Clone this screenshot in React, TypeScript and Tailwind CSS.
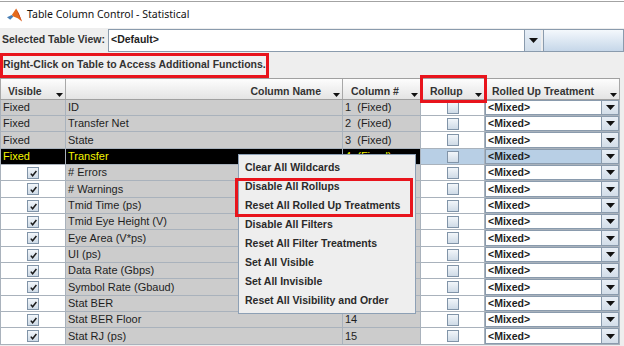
import React from 'react';

type Row = { name: string; num: string; fixed?: boolean; selected?: boolean };

// rows 5-13 sit under the context menu, so their column # is not visible
const rows: Row[] = [
  { name: 'ID', num: '1  (Fixed)', fixed: true },
  { name: 'Transfer Net', num: '2  (Fixed)', fixed: true },
  { name: 'State', num: '3  (Fixed)', fixed: true },
  { name: 'Transfer', num: '4  (Fixed)', fixed: true, selected: true },
  { name: '# Errors', num: '' },
  { name: '# Warnings', num: '' },
  { name: 'Tmid Time (ps)', num: '' },
  { name: 'Tmid Eye Height (V)', num: '' },
  { name: 'Eye Area (V*ps)', num: '' },
  { name: 'UI (ps)', num: '' },
  { name: 'Data Rate (Gbps)', num: '' },
  { name: 'Symbol Rate (Gbaud)', num: '' },
  { name: 'Stat BER', num: '' },
  { name: 'Stat BER Floor', num: '14' },
  { name: 'Stat RJ (ps)', num: '15' },
];

const menuItems = [
  'Clear All Wildcards',
  'Disable All Rollups',
  'Reset All Rolled Up Treatments',
  'Disable All Filters',
  'Reset All Filter Treatments',
  'Set All Visible',
  'Set All Invisible',
  'Reset All Visibility and Order',
];

const rowHeights = ['h-[16px]', 'h-[16px]', 'h-[17px]'];

const SortArrow = () => (
  <svg className="absolute right-[2px] bottom-[2px]" width="7" height="4" viewBox="0 0 7 4">
    <path d="M0 0h7L3.5 4z" fill="#111" />
  </svg>
);

const DownArrow = () => (
  <svg width="9" height="5" viewBox="0 0 9 5">
    <path d="M0 0h9L4.5 5z" fill="#111" />
  </svg>
);

const CheckBox = ({ checked }: { checked?: boolean }) => (
  <div className="w-[12px] h-[12px] border border-[#8194a8] bg-gradient-to-b from-[#f2f6fa] to-[#cfdbe7] flex items-end justify-start pl-[2px] pb-[1px]">
    {checked && (
      <svg width="7" height="7" viewBox="0 0 7 7">
        <path d="M0.8 3.6L2.6 5.8L6.4 1" stroke="#1a1a1a" strokeWidth="1.5" fill="none" />
      </svg>
    )}
  </div>
);

const MatlabIcon = () => (
  <svg width="15" height="14" viewBox="0 0 14 13">
    <path d="M0 8.5L4.5 6.5L6 8L3 11z" fill="#4a7fb5" />
    <path d="M4.5 6.5L8.5 0.5L11 5L14 12.5L10 9.5L6 8z" fill="#e46a1c" />
    <path d="M8.5 0.5L11 5L14 12.5L12 9z" fill="#b8321a" />
  </svg>
);

export default function App() {
  return (
    <div className="relative w-[624px] h-[346px] overflow-hidden bg-[#eeeeee] font-['Liberation_Sans',Arial,sans-serif] text-[#1e1e1e]">
      {/* title bar */}
      <div className="bg-white pt-[1px] h-[28px]">
        <div className="border-t border-[#a3a3a3] h-full flex items-center gap-[5px] pl-[7px] pb-[1px]">
          <MatlabIcon />
          <span className="font-['Noto_Sans',sans-serif] text-[10.5px] text-[#111]">Table Column Control - Statistical</span>
        </div>
      </div>

      {/* selected view */}
      <div className="flex items-center h-[24px]">
        <span className="w-[108px] pl-[2px] text-[10.5px] font-bold text-[#333]">Selected Table View:</span>
        <div className="flex h-[23px] flex-1 border border-[#8a9bad]">
          <div className="flex-1 bg-white flex items-center pl-[2px] text-[10.5px] font-bold">&lt;Default&gt;</div>
          <div className="w-[17px] border-l border-[#8a9bad] bg-gradient-to-b from-[#e6eef7] to-[#d0ddea] flex items-center justify-center">
            <DownArrow />
          </div>
          <div className="w-[2px] bg-[#eeeeee]" />
          <div className="w-[80px] border-l border-[#8a9bad] bg-gradient-to-b from-[#f4f8fc] to-[#c6d7e9]" />
        </div>
      </div>

      {/* hint */}
      <div className="h-[26px] flex items-center">
        <div className="h-[25px] w-[269px] border-[3px] border-[#e8141c] bg-[#f0f0f0] flex items-center text-[10.5px] font-bold text-[#333] whitespace-nowrap">
          Right-Click on Table to Access Additional Functions.
        </div>
      </div>

      {/* table */}
      <div className="w-[620px]">
        <div className="flex h-[22px] border-y border-[#a0a0a0] bg-gradient-to-b from-[#fdfdfd] to-[#e4e4e4] text-[10.5px] font-bold text-[#333]">
          <div className="relative w-[66px] border-r border-l border-[#a8a8a8] pl-[7px] pt-[5px]">Visible<SortArrow /></div>
          <div className="relative w-[277px] border-r border-[#a8a8a8] pr-[21px] pt-[5px] text-right">Column Name<SortArrow /></div>
          <div className="relative w-[78px] border-r border-[#a8a8a8] pl-[8px] pt-[5px]">Column #<SortArrow /></div>
          <div className="relative w-[64px] border-r border-[#a8a8a8] pl-[9px] pt-[5px]">Rollup<SortArrow /></div>
          <div className="relative w-[135px] border-r border-[#a8a8a8] pl-[7px] pt-[5px]">Rolled Up Treatment<SortArrow /></div>
        </div>

        {rows.map((r, i) => {
          const sel = r.selected;
          const gray = sel ? 'bg-black text-[#f5f500]' : 'bg-[#cccccc]';
          return (
            <div key={r.name} className={`flex border-b border-[#a9b2bc] ${rowHeights[i % 3]} text-[11px] leading-none`}>
              <div className={`w-[66px] border-r border-l border-[#a9b2bc] flex items-center ${r.fixed ? `${gray} pl-[2px]` : 'bg-white justify-center'}`}>
                {r.fixed ? 'Fixed' : <CheckBox checked />}
              </div>
              <div className={`w-[277px] border-r border-[#a9b2bc] flex items-center pl-[2px] ${gray}`}>{r.name}</div>
              <div className={`w-[78px] border-r border-[#a9b2bc] flex items-center pl-[2px] whitespace-pre ${gray}`}>{r.num}</div>
              <div className={`w-[64px] border-r border-[#a9b2bc] flex items-center justify-center ${sel ? 'bg-[#b8cfe5]' : 'bg-white'}`}>
                <CheckBox />
              </div>
              <div className={`w-[135px] border-r border-[#a9b2bc] flex ${sel ? 'bg-[#b8cfe5]' : 'bg-white'}`}>
                <div className="flex flex-1 border border-[#8a9bad]">
                  <div className={`flex-1 flex items-center pl-[2px] text-[10.5px] font-bold ${sel ? 'bg-[#b8cfe5]' : 'bg-white'}`}>&lt;Mixed&gt;</div>
                  <div className="w-[17px] border-l border-[#8a9bad] bg-gradient-to-b from-[#e9eff6] to-[#d3dee9] flex items-center justify-center">
                    <DownArrow />
                  </div>
                </div>
              </div>
            </div>
          );
        })}
      </div>

      {/* rollup header highlight */}
      <div className="absolute left-[420px] top-[75px] w-[67px] h-[28px] border-[3px] border-[#e8141c]" />

      {/* context menu */}
      <div className="absolute left-[238px] top-[154px] w-[178px] py-[3px] bg-[#eeeeee] border border-[#8da0b5] text-[10.5px] font-bold text-[#2a2a2a]">
        {menuItems.map((m) => (
          <div key={m} className="h-[19px] flex items-center pl-[6px] whitespace-nowrap">{m}</div>
        ))}
      </div>
      <div className="absolute left-[235px] top-[178px] w-[178px] h-[39px] border-[3px] border-[#e8141c]" />
    </div>
  );
}
